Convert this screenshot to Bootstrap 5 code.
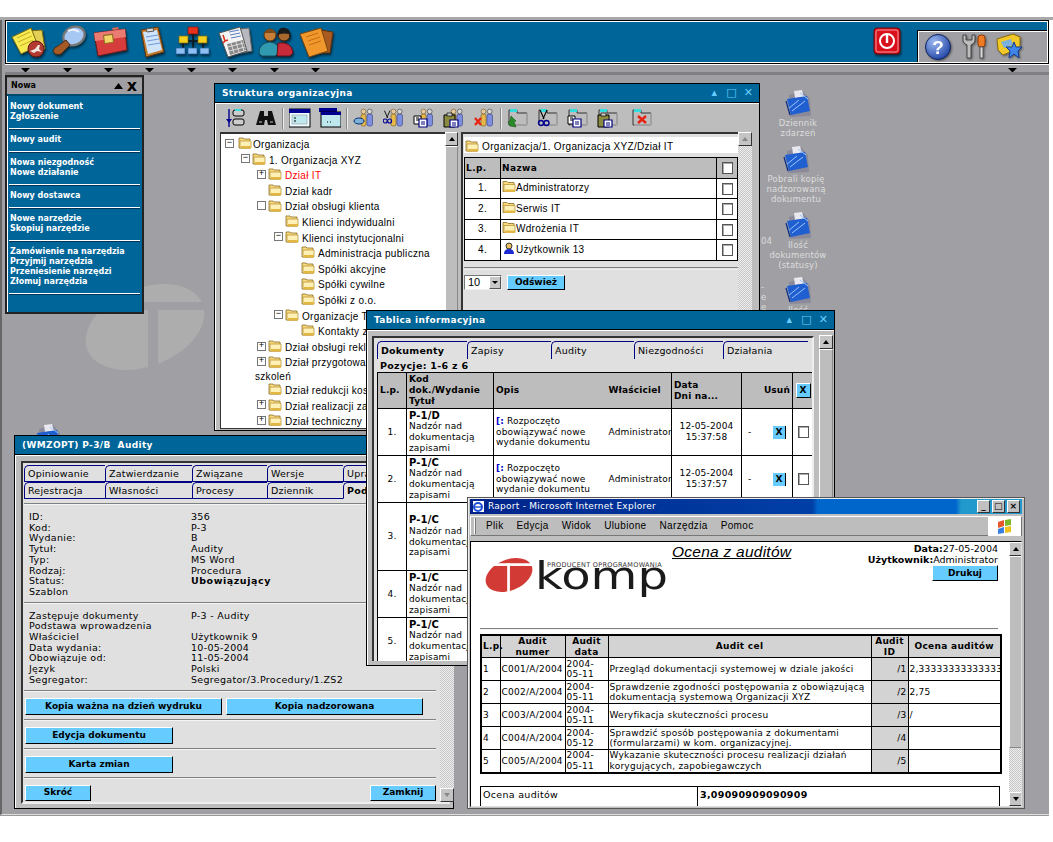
<!DOCTYPE html>
<html lang="pl">
<head>
<meta charset="UTF-8">
<title>System dokumentacji</title>
<link href="https://cdn.jsdelivr.net/npm/bootstrap@5.3.1/dist/css/bootstrap.min.css" rel="stylesheet">
<style>
  body { margin: 0; background: #fff; }
  .wp-page { width: 1053px; height: 842px; overflow: hidden; font: 9px/10.7px "DejaVu Sans", sans-serif; color: #000; background: #fff; }
  .wp-top { height: 20px; flex: none; border-bottom: 3px solid #a8a8a8; }
  .wp-shell { height: 795px; width: 1049px; flex: none; padding-left: 3px; background: #a0a0a4; border-left: 2px solid #666; border-bottom: 1px solid #ddd; box-shadow: 0 1px 0 #999; }
  .wp-bar { height: 44px; background: #006699; border: 1px solid #000; border-left-width: 2px; outline: 1px solid #fff; outline-offset: -2px; }
  .wp-cell { width: 41.4px; flex: none; text-align: center; padding-top: 4px; }
  .wp-cell svg { width: 38px; height: 33px; filter: drop-shadow(1px 2px 1px rgba(0,0,0,.55)); }
  .wp-bartab { width: 131px; height: 33px; margin-top: 7px; padding-left: 6px; background: #a0a0a4; border-left: 1px solid #000; border-top: 1px solid #000; box-shadow: inset 1px 1px 0 #fff; }
  .wp-bartab svg { width: 28px; height: 28px; margin-top: 2px; filter: drop-shadow(1px 1px 1px rgba(0,0,0,.45)); }
  .wp-strip { height: 11px; background: #a0a0a4; border-top: 1px solid #fff; border-bottom: 3px solid #808084; padding-top: 1px; }
  .wp-arrow { width: 41.4px; flex: none; text-align: center; }
  .wp-arrow i { display: inline-block; border: 4px solid transparent; border-top: 4px solid #000; border-bottom: 0; width: 9px; height: 4px; vertical-align: top; margin-top: 2px; }
  .wp-pow { position: absolute; left: 872px; top: 26px; width: 30px; height: 30px; filter: drop-shadow(1px 2px 1px rgba(0,0,0,.5)); }
  .wp-mark { position: absolute; left: 80px; top: 280px; width: 130px; height: 95px; }

  .wp-win { position: absolute; background: #bdbdbd; border: 1px solid #000; box-shadow: inset 1px 0 0 #fff; }
  .wp-title { height: 19px; background: #006699; color: #fff; font-weight: 700; letter-spacing: .35px; border-bottom: 1px solid #000; padding: 0 2px 0 7px; }
  .wp-title + * { border-top: 1px solid #fff; }
  .wp-ctl { color: #66ccff; font: 400 11px/12px "DejaVu Sans", sans-serif; width: 17px; text-align: center; }
  .wp-inset { background: #e0e0e0; border: 2px solid #333; border-right-color: #eee; border-bottom-color: #eee; }

  #menuWin { left: 5px; top: 75px; width: 139px; height: 239px; border: 2px solid #222; background: #006699; z-index: 2; color: #fff; font-weight: 700; font-size: 8px; line-height: 10px; }
  .wp-mhead { height: 19px; background: #a0a0a4; color: #000; padding: 0 5px 0 4px; border-top: 1px solid #777; border-bottom: 2px solid #004a70; }
  .wp-mgrp { margin: 0 2px; padding: 6px 1px 6px 1px; border-bottom: 1px solid #fff; box-shadow: 0 1px 0 #003355; white-space: nowrap; }
  .wp-mgrp:first-of-type { padding-top: 2px; }

  #orgWin { left: 214px; top: 83px; width: 546px; height: 348px; z-index: 3; }
  .wp-tools { height: 29px; padding-left: 10px; }
  .wp-tools svg { width: 22px; height: 20px; flex: none; }
  .wp-sep { width: 2px; height: 21px; margin: 0 -3px; background: #888; border-right: 1px solid #eee; flex: none; }
  .wp-panes { height: 297px; padding-left: 5px; }
  .wp-tree { width: 225px; flex: none; background: #fff; border: 1px solid #333; border-right: 0; border-top-width: 2px; padding: 3px 0 0 4px; overflow: hidden; font: 10px/15.6px "Liberation Sans", sans-serif; letter-spacing: .3px; }
  .wp-node { height: 15.6px; white-space: nowrap; display: flex; align-items: center; }
  .wp-node svg { width: 14px; height: 12px; flex: none; margin-right: 3px; margin-top: -3px; }
  .wp-exp { width: 9px; height: 9px; border: 1px solid #777; font: 9px/7px "Liberation Mono", monospace; text-align: center; flex: none; margin-right: 2px; margin-top: -3px; background: #fff; letter-spacing: 0; }
  .wp-noexp { width: 11px; flex: none; }
  .wp-d0 svg { margin-left: 2px; margin-right: 1px; }
  .wp-d1 { padding-left: 16px; } .wp-d2 { padding-left: 32px; } .wp-d3 { padding-left: 49px; } .wp-d4 { padding-left: 65px; }
  .wp-wrapline { height: 12px; padding-left: 30px; }
  .wp-tree-red { color: #f00; }
  .wp-sb { width: 14px; flex: none; background: #bdbdbd; display: flex; flex-direction: column; }
  .wp-panes > .wp-sb { width: 13px; }
  .wp-sb-track { background: repeating-conic-gradient(#c6c6c6 0 25%, #eee 0 50%) 0 0 / 2px 2px; }
  .wp-sbtn { height: 14px; flex: none; background: #c4c4c4; border: 1px solid; border-color: #fff #333 #333 #fff; position: relative; }
  .wp-sbtn::after { content: ""; position: absolute; left: 3px; top: 4px; border: 3px solid transparent; border-bottom: 4px solid #000; border-top: 0; }
  .wp-sbtn.wp-down::after { border-top: 4px solid #000; border-bottom: 0; }
  .wp-sbtn.wp-dim::after { border-bottom-color: #888; border-top-color: #888; }
  .wp-sb-thumb { background: #bdbdbd; border: 1px solid; border-color: #fff #888 #888 #fff; }
  .wp-right { width: 291px; flex: none; margin-left: 3px; }
  .wp-rpane { width: 277px; flex: none; background: #e0e0e0; border: 2px solid #333; border-right: 0; border-bottom: 0; padding: 1px 0 0 1px; }
  .wp-path { height: 16px; margin-top: 2px; background: #fff; font: 10px/20px "Liberation Sans", sans-serif; letter-spacing: .3px; padding-left: 1px; margin-bottom: 4px; white-space: nowrap; }
  .wp-path svg { width: 14px; height: 12px; margin-top: -3px; }

  .wp-grid { margin: 0; border-color: #000; --bs-table-bg: transparent; font: inherit; color: inherit; table-layout: fixed; }
  .wp-grid td, .wp-grid th { padding: 0 1px; border-color: #000; font-weight: 400; vertical-align: middle; line-height: inherit; }
  .wp-grid td { background: #fff; }
  .wp-grid th { background: #bdbdbd; font-weight: 700; }
  .wp-lp { width: 36px; }
  .wp-chk { display: inline-block; width: 11px; height: 12px; border: 1px solid #555; background: #fff; box-shadow: inset 1px 1px 0 #aaa; vertical-align: middle; }
  .wp-orgt { font: 10px/16px "Liberation Sans", sans-serif; letter-spacing: .3px; width: 274px; }
  .wp-orgt td, .wp-orgt th { height: 20.5px; font-family: "Liberation Sans", sans-serif; }
  .wp-orgt th { font-family: "DejaVu Sans", sans-serif; font-size: 9px; letter-spacing: .4px; }
  .wp-orgt svg { width: 14px; height: 13px; margin-top: -4px; vertical-align: middle; }
  .wp-rule { border-top: 1px solid #808080; box-shadow: 0 1px 0 #eee; height: 2px; margin-top: 6px; }
  .wp-pick { margin-top: 6px; }
  .wp-sel { width: 38px; height: 15px; background: #fff; border: 1px solid; border-color: #777 #eee #eee #777; font: 11px/13px "Liberation Sans", sans-serif; padding-left: 3px; }
  .wp-sel i { margin-left: auto; width: 12px; height: 13px; background: #c8c8c8; border: 1px solid; border-color: #fff #555 #555 #fff; position: relative; }
  .wp-sel i::after { content: ""; position: absolute; left: 2px; top: 4px; border: 3px solid transparent; border-top: 3px solid #000; border-bottom: 0; }
  .wp-btn { --bs-btn-padding-x: 0; --bs-btn-padding-y: 0; --bs-btn-font-size: 9px; --bs-btn-font-weight: 700; --bs-btn-border-radius: 0; --bs-btn-bg: #66ccff; --bs-btn-color: #000; --bs-btn-hover-bg: #66ccff; --bs-btn-line-height: 13px; border-width: 1px; border-color: #fff #000 #000 #fff; display: block; font-family: "DejaVu Sans", sans-serif; }
  .wp-refresh { width: 58px; height: 15px; margin-left: 5px; }

  #infoWin { left: 366px; top: 310px; width: 469px; height: 356px; z-index: 5; }
  .wp-infob { margin: 5px 5px 0 5px; height: 325px; border-bottom: 0; padding: 3px 0 0 3px; overflow: hidden; width: 442px; flex: none; }
  .wp-tabs { height: 18px; font-size: 9.5px; letter-spacing: .2px; }
  .wp-tabc { flex: none; border-top: 1px solid #000080; border-left: 1px solid #000080; border-top-left-radius: 5px; padding: 3px 0 0 3px; white-space: nowrap; overflow: hidden; line-height: 12px; }
  .wp-tabc.wp-on { font-weight: 700; }
  .wp-t90 { width: 90px; } .wp-t84 { width: 84px; } .wp-t83 { width: 83px; } .wp-t89 { width: 89px; } .wp-t85 { width: 85px; }
  .wp-pos { height: 13px; padding: 1px 0 0 3px; font-weight: 700; letter-spacing: .3px; font-size: 9.5px; line-height: 12px; }
  .wp-itbl { width: 436px; letter-spacing: .15px; }
  .wp-itbl th { height: 36px; padding: 0 2px; }
  .wp-itbl td { height: 47px; padding: 0 2px; }
  .wp-itbl td.wp-h68 { height: 68px; }
  .wp-c1 { width: 29px; } .wp-c2 { width: 87px; } .wp-c3 { width: 113px; } .wp-c4 { width: 65px; } .wp-c5 { width: 70px; } .wp-c6 { width: 51px; } .wp-c7 { width: 21px; }
  .wp-code { font-weight: 700; font-size: 10px; }
  .wp-x { display: inline-block; width: 13px; height: 13px; background: #66ccff; border-right: 1px solid #000; font: 700 9px/13px "DejaVu Sans", sans-serif; text-align: center; color: #000; }
  .wp-xh { border: 1px solid; border-color: #fff #000 #000 #fff; width: 15px; height: 15px; }
  .wp-blue { color: #00c; font-weight: 700; }

  #docWin { left: 14px; top: 435px; width: 440px; height: 374px; z-index: 4; }
  .wp-dinner { margin: 5px 4px 0 6px; height: 343px; padding: 2px 0 0 1px; width: 429px; flex: none; }
  .wp-dcol { width: 412px; flex: none; }
  .wp-t81 { width: 81px; } .wp-t87 { width: 87px; } .wp-t75 { width: 75px; } .wp-t76 { width: 76px; } .wp-t92 { width: 92px; }
  .wp-dtabs { height: 17px; font-size: 9.5px; letter-spacing: .2px; }
  .wp-dtabs .wp-tabc { padding-top: 2px; border-bottom: 1px solid #000080; }
  .wp-dtabs .wp-tabc.wp-on { border-bottom-color: transparent; }
  .wp-dline { border-top: 1px solid #808080; box-shadow: 0 1px 0 #f4f4f4; }
  .wp-info { display: grid; grid-template-columns: 162px 1fr; padding: 8px 0 4px 5px; letter-spacing: .3px; font-size: 9.5px; line-height: 10.7px; }
  .wp-info b { letter-spacing: .55px; }
  .wp-bw1 { width: 197px; height: 17px; } .wp-bw2 { width: 197px; height: 17px; } .wp-bw3 { width: 148px; height: 17px; }
  .wp-brow { height: 28px; padding: 7px 0 0 1px; }
  .wp-brow .wp-btn { margin-right: 4px; }
  .wp-bw4 { width: 66px; height: 16px; }
  .wp-pad0 { margin-left: auto; margin-right: 0 !important; }

  #ieWin { left: 467px; top: 497px; width: 558px; height: 312px; z-index: 6; border: 1px solid #555; box-shadow: inset 1px 1px 0 #eee; padding: 1px 2px 3px 2px; background: #c0c0c0; }
  .wp-ietitle { height: 15px; color: #fff; font-size: 9px; letter-spacing: .25px; background: linear-gradient(90deg, #00238a 0, #003399 30%, #003fa6 62%, #0066cc 63%, #0066cc 88%, #2299cc 89%, #2299cc 100%); padding-left: 2px; }
  .wp-ietitle svg { width: 13px; height: 13px; margin-right: 3px; }
  .wp-iebtn { width: 13px; height: 13px; background: #c0c0c0; border: 1px solid; border-color: #fff #333 #333 #fff; margin-right: 2px; color: #000; font: 700 9px/10px "DejaVu Sans", sans-serif; text-align: center; }
  .wp-iemenu { height: 20px; margin-top: 2px; background: #bdbdbd; border: 1px solid; border-color: #fff #777 #777 #fff; padding-left: 3px; font: 10px/18px "Liberation Sans", sans-serif; gap: 13px; letter-spacing: .35px; }
  .wp-iemenu i { width: 2px; height: 16px; border-left: 1px solid #fff; border-right: 1px solid #777; margin-right: -3px; }
  .wp-ieflag { margin-left: auto; width: 33px; height: 19px; background: #fff; text-align: center; padding-top: 1px; }
  .wp-ieflag svg { width: 17px; height: 17px; }
  .wp-iebody { height: 266px; margin-top: 5px; background: #fff; border: 1px solid; border-color: #000 #ddd #ddd #000; overflow: hidden; }
  .wp-iemain { width: 538px; flex: none; padding: 4px 11px 0 9px; overflow: hidden; }
  .wp-logo { width: 187px; height: 62px; margin-left: 5px; position: relative; flex: none; }
  .wp-logo svg { position: absolute; left: -2px; top: 10px; width: 52px; height: 38px; }
  .wp-komp { position: absolute; left: 50px; top: 9px; font: 37px/44px "DejaVu Sans", sans-serif; color: #1a1a1a; transform: scaleX(1.3); transform-origin: left; }
  .wp-prod { position: absolute; left: 62px; top: 16px; font: 6.5px/7px "DejaVu Sans", sans-serif; color: #333; white-space: nowrap; letter-spacing: .3px; }
  .wp-rtitle { font: italic 15.5px/20px "Liberation Sans", sans-serif; text-decoration: underline; margin-left: 0; letter-spacing: .25px; margin-top: -4px; }
  .wp-rinfo { margin-left: auto; text-align: right; font-size: 9.5px; line-height: 10.5px; margin-top: -2px; }
  .wp-rule2 { margin: 20px 0 5px; }
  .wp-rtbl { width: 520px; border: 2px solid #000; letter-spacing: .25px; line-height: 10.7px; }
  .wp-rtbl td, .wp-rtbl th { height: 23px; line-height: 10.6px; }
  .wp-rtbl th { height: 21px; background: #d3d3d3; letter-spacing: .3px; }
  .wp-grid td.wp-rgray { background: #d3d3d3; }
  .wp-r1 { width: 19px; } .wp-r2 { width: 65px; } .wp-r3 { width: 43px; } .wp-r4 { width: 263px; } .wp-r5 { width: 37px; } .wp-r6 { width: 93px; }
  .wp-btm { width: 520px; height: 22px; border: 1px solid #000; border-bottom: 0; margin-top: 12px; font-size: 9.5px; letter-spacing: .3px; }
  .wp-btm div { padding: 3px 2px 0 2px; }
  .wp-btm div:first-child { width: 217px; border-right: 1px solid #000; flex: none; }
  .wp-iesb { width: 14px; flex: none; margin-left: 0; }
  .wp-rep { height: 192px; flex: none; }

  .wp-dic { position: absolute; width: 60px; text-align: center; color: #ddd; letter-spacing: .2px; line-height: 10px; font-size: 8.5px; z-index: 1; }
  .wp-dic svg { width: 28px; height: 28px; display: block; margin: 0 auto; }
  .wp-i1 { left: 768px; top: 90px; } .wp-i2 { left: 766px; top: 146px; } .wp-i3 { left: 768px; top: 212px; } .wp-i4 { left: 768px; top: 277px; } .wp-i5 { left: 18px; top: 424px; }
  .wp-frag { position: absolute; left: 761px; color: #ddd; font-size: 8.5px; line-height: 10px; z-index: 1; }
  .wp-f1 { top: 236px; } .wp-f2 { top: 282px; }
</style>
</head>
<body>

<svg width="0" height="0" class="position-absolute">
  <defs>
    <symbol id="ic-folder" viewBox="0 0 14 12">
      <path d="M1 2 L1 1 L5 1 L6 2 L12 2 L12 11 L1 11Z" fill="#fbd97c" stroke="#8a7026" stroke-width=".8"/>
      <path d="M2 4 H13 V11 H2Z" fill="#fff0b5" stroke="#b8983f" stroke-width=".8"/>
      <path d="M3 9 H13 V11.5 H3Z" fill="#e2b743"/>
    </symbol>
    <symbol id="ic-doc" viewBox="0 0 28 28">
      <path d="M5 5 L19 1 L26 9 L27 26 L6 27Z" fill="#8a8a9a"/>
      <path d="M10 1 L18 0 L20 7 L11 8Z" fill="#e8e8ee"/>
      <path d="M3 9 L23 6 L26 21 L7 25Z" fill="#1f5fd0"/>
      <path d="M4 19 L15 10 M8 21 L21 11 M16 3 L24 9" stroke="#9cc4ff" stroke-width="1" fill="none"/>
      <path d="M2 11 L6 25" stroke="#0a2a80" stroke-width="1.2"/>
    </symbol>
    <symbol id="ic-people" viewBox="0 0 22 20">
      <rect x="8" y="6" width="5" height="12" rx="2" fill="#e8b84a" stroke="#6b5520" stroke-width=".6"/>
      <circle cx="10.5" cy="3.5" r="2.4" fill="#e8c9a0" stroke="#6b5520" stroke-width=".6"/>
      <rect x="14" y="6" width="5.5" height="12" rx="2" fill="#7f8fe0" stroke="#333a80" stroke-width=".6"/>
      <circle cx="16.7" cy="3.5" r="2.4" fill="#d8d8d8" stroke="#333" stroke-width=".6"/>
    </symbol>
    <symbol id="ic-fold2" viewBox="0 0 22 20">
      <path d="M2 2 H10 V5 H20 V17 H2Z" fill="#bdbdbd" stroke="#333" stroke-width="1"/>
      <path d="M3 1 H10 V4 H3Z" fill="#33dddd"/>
      <path d="M20 5 V17 H3" stroke="#fff" stroke-width=".6" fill="none"/>
    </symbol>
    <symbol id="ic-copy" viewBox="0 0 22 20">
      <path d="M1 8 H8 V16 H1Z" fill="#fff" stroke="#000"/>
      <path d="M6 11 H14 V19 H6Z" fill="#fff" stroke="#000080" stroke-width="1.2"/>
      <path d="M8 14 H12 M8 16 H12" stroke="#000080"/>
      <path d="M3 10 H6 M3 12 H6" stroke="#000"/>
    </symbol>
    <symbol id="ic-clip" viewBox="0 0 22 20">
      <path d="M1 7 H12 V19 H1Z" fill="#8b8b40" stroke="#000"/>
      <path d="M4 5 H9 V8 H4Z" fill="#ccc" stroke="#000" stroke-width=".7"/>
      <path d="M7 12 H15 V19 H7Z" fill="#fff" stroke="#000080" stroke-width="1.2"/>
      <path d="M9 15 H13 M9 17 H13" stroke="#000080"/>
    </symbol>
    <symbol id="ic-scis" viewBox="0 0 22 20">
      <path d="M3 2 L7 11 M10 2 L6 11" stroke="#000" stroke-width="1.1" fill="none"/>
      <circle cx="4" cy="15" r="2.5" fill="none" stroke="#000090" stroke-width="1.4"/>
      <circle cx="9.5" cy="15" r="2.5" fill="none" stroke="#000090" stroke-width="1.4"/>
    </symbol>
  </defs>
</svg>

<div class="wp-page d-flex flex-column position-relative">
  <div class="wp-top"></div>
  <div class="wp-shell">
    <!-- pasek ikon -->
    <div class="wp-bar d-flex">
      <div class="d-flex flex-grow-1">
        <div class="wp-cell"><svg viewBox="0 0 38 33">
          <path d="M18 6 L33 5 L36 24 L20 27Z" fill="#e3cf55" stroke="#7b6c14"/>
          <path d="M3 12 L22 3 L29 21 L12 29Z" fill="#f8ea52" stroke="#7b6c14"/>
          <path d="M8 13 L21 7 M9 17 L23 11 M11 21 L24 15" stroke="#c4ae22"/>
          <circle cx="27" cy="24" r="8" fill="#b23a30" stroke="#5a1a14"/>
          <path d="M21 26 L26 24 L29 20 L31 20 L30 24 L33 27 L28 26 L25 28Z" fill="#f3e6e0"/>
        </svg></div>
        <div class="wp-cell"><svg viewBox="0 0 38 33">
          <ellipse cx="24" cy="11" rx="11" ry="9" fill="#a8c8f4" stroke="#777" stroke-width="2.4" transform="rotate(-25 24 11)"/>
          <path d="M18 6 Q24 3 29 7" stroke="#e8f2ff" stroke-width="2" fill="none"/>
          <path d="M16 15 L20 20 L11 29 Q5 31 3 26 Q4 22 8 21Z" fill="#a45a26" stroke="#4e2a10"/>
        </svg></div>
        <div class="wp-cell"><svg viewBox="0 0 38 33">
          <path d="M21 3 L27 2 L29 7 L23 8Z" fill="#d96a5a"/>
          <path d="M3 8 L34 4 L36 25 L7 31Z" fill="#d63c3c" stroke="#6a1a1a"/>
          <path d="M3 8 L34 4 L35 12 L4 16Z" fill="#e97b73"/>
          <rect x="13" y="10" width="9" height="8" fill="#f2d66a" stroke="#8a6a1a" transform="rotate(-7 17 14)"/>
        </svg></div>
        <div class="wp-cell"><svg viewBox="0 0 38 33">
          <path d="M8 5 L25 2 L31 27 L13 32Z" fill="#c47a2c" stroke="#5e3610"/>
          <path d="M10 7 L24 5 L29 25 L15 29Z" fill="#cfe3fb"/>
          <path d="M13 12 L25 10 M14 16 L26 14 M15 20 L27 18" stroke="#6e9ad8"/>
          <path d="M13 4 L20 3 L21 6 L14 7Z" fill="#ddd" stroke="#555"/>
        </svg></div>
        <div class="wp-cell"><svg viewBox="0 0 38 33">
          <path d="M19 9 V15 M9 16 H29 M9 16 V25 M19 16 V25 M29 16 V25" stroke="#111" stroke-width="1.4" fill="none"/>
          <rect x="14" y="2" width="10" height="7" fill="#e8321e" stroke="#7a160c" stroke-width=".7"/>
          <rect x="5" y="11" width="9" height="7" fill="#f4d020" stroke="#7a6a10" stroke-width=".7"/>
          <rect x="24" y="11" width="9" height="7" fill="#f4d020" stroke="#7a6a10" stroke-width=".7"/>
          <rect x="2" y="23" width="9" height="6" fill="#8cc0f4" stroke="#2a5a9a" stroke-width=".7"/>
          <rect x="14" y="23" width="9" height="6" fill="#8cc0f4" stroke="#2a5a9a" stroke-width=".7"/>
          <rect x="26" y="23" width="9" height="6" fill="#8cc0f4" stroke="#2a5a9a" stroke-width=".7"/>
        </svg></div>
        <div class="wp-cell"><svg viewBox="0 0 38 33">
          <path d="M14 5 L33 3 L36 26 L20 29Z" fill="#b8b8c0" stroke="#666"/>
          <path d="M3 8 L24 2 L31 26 L12 32Z" fill="#f4f4f4" stroke="#555"/>
          <path d="M13 7 L23 5 M14 10 L24 8 M15 13 L25 11" stroke="#5a80c0"/>
          <path d="M7 10 L9 16 L12 15 M9 16 L7 18" stroke="#d8341e" stroke-width="1.6" fill="none"/>
          <path d="M11 19 L27 15 L30 25 L14 30Z" fill="#888"/>
          <path d="M15 18 L18 28 M20 17 L23 27 M25 16 L28 26 M12 22 L28 18 M13 26 L29 22" stroke="#eee" stroke-width=".8"/>
        </svg></div>
        <div class="wp-cell"><svg viewBox="0 0 38 33">
          <path d="M2 28 Q2 18 13 17 Q23 18 22 28 L18 31 H5Z" fill="#2f9ab0" stroke="#17505e"/>
          <circle cx="13" cy="10" r="6" fill="#c88038" stroke="#5e3610"/>
          <path d="M7 8 Q13 1 19 8Z" fill="#7a4a1a"/>
          <path d="M21 18 Q35 16 36 28 L33 31 H20Z" fill="#c82a3a" stroke="#5e1018"/>
          <circle cx="27" cy="10" r="6" fill="#a8682c" stroke="#3a2008"/>
          <path d="M20 11 Q21 1 28 3 Q35 4 33 15 L32 9 Q27 8 23 9Z" fill="#1a1a1a"/>
        </svg></div>
        <div class="wp-cell"><svg viewBox="0 0 38 33">
          <path d="M17 4 L35 7 L32 28 L16 28Z" fill="#a85a20" stroke="#5e300c"/>
          <path d="M2 9 L23 3 L30 26 L11 32Z" fill="#f0982c" stroke="#7a4610"/>
          <path d="M8 12 L20 8 M10 16 L22 12 M11 20 L23 16" stroke="#c46c14"/>
        </svg></div>
      </div>
      <div class="wp-bartab d-flex align-self-end gap-2">
        <svg viewBox="0 0 28 28"><defs><radialGradient id="gh" cx=".35" cy=".3" r=".8"><stop offset="0" stop-color="#9cb8f0"/><stop offset="1" stop-color="#1a3ea0"/></radialGradient></defs><circle cx="14" cy="14" r="12.5" fill="url(#gh)" stroke="#0e2360"/><text x="14" y="21" font-size="19" font-weight="700" fill="#fff" text-anchor="middle" font-family="Liberation Sans">?</text></svg>
        <svg viewBox="0 0 28 28"><path d="M3 2 L3 8 Q4 11 7 12 L7 25 L11 25 L11 12 Q14 11 15 8 L15 2 L12 2 L12 7 L6 7 L6 2Z" fill="#bdbdbd" stroke="#444"/><rect x="18" y="2" width="7" height="12" rx="3" fill="#f07a22" stroke="#8a3c08"/><rect x="20" y="14" width="3" height="11" fill="#ddd" stroke="#555"/></svg>
        <svg viewBox="0 0 28 28"><path d="M1 6 L17 1 L24 4 L24 15 L7 22 L2 17Z" fill="#f0c828" stroke="#8a6a10"/><path d="M5 9 L15 6 L17 12 L8 15Z" fill="#7ab0e0"/><path d="M18 9 L20 14 L26 14 L22 18 L23 25 L18 21 L13 25 L14 18 L10 14 L16 14Z" fill="#3f86e8" stroke="#123a90"/></svg>
      </div>
    </div>
    <div class="wp-strip d-flex">
      <div class="wp-arrow"><i></i></div><div class="wp-arrow"><i></i></div><div class="wp-arrow"><i></i></div><div class="wp-arrow"><i></i></div>
      <div class="wp-arrow"><i></i></div><div class="wp-arrow"><i></i></div><div class="wp-arrow"><i></i></div><div class="wp-arrow"><i></i></div>
      <div class="wp-arrow ms-auto me-3"><i></i></div>
    </div>
  </div>
  <div class="flex-grow-1"></div>

  <svg class="wp-pow" viewBox="0 0 30 30"><rect x="2" y="2" width="26" height="26" rx="3" fill="#d8101c" stroke="#70060c"/><rect x="4" y="4" width="22" height="22" rx="2" fill="none" stroke="#ff9a9a"/><circle cx="15" cy="15" r="7" fill="none" stroke="#fff" stroke-width="2"/><path d="M15 9 V17" stroke="#fff" stroke-width="2.4"/></svg>

  <svg class="wp-mark" viewBox="0 0 130 95">
    <ellipse cx="65" cy="47" rx="62" ry="39" fill="#adadad" transform="rotate(-22 65 47)"/>
    <rect x="0" y="22" width="130" height="8" fill="#a0a0a4"/>
    <rect x="68" y="22" width="10" height="73" fill="#a0a0a4"/>
  </svg>

  <!-- ikony pulpitu -->
  <div class="wp-dic wp-i1"><svg><use href="#ic-doc"/></svg>Dziennik zdarzeń</div>
  <div class="wp-dic wp-i2"><svg><use href="#ic-doc"/></svg>Pobrali kopię nadzorowaną dokumentu</div>
  <div class="wp-dic wp-i3"><svg><use href="#ic-doc"/></svg>Ilość dokumentów (statusy)</div>
  <div class="wp-dic wp-i4"><svg><use href="#ic-doc"/></svg>Ilość</div>
  <div class="wp-dic wp-i5"><svg><use href="#ic-doc"/></svg></div>
  <div class="wp-frag wp-f1">04</div>
  <div class="wp-frag wp-f2">-<br>e<br>e</div>

  <!-- menu Nowa -->
  <div class="wp-win" id="menuWin">
    <div class="wp-mhead d-flex align-items-center justify-content-between">
      <span>Nowa</span>
      <span class="d-flex align-items-center gap-1"><svg width="9" height="6" viewBox="0 0 9 6"><path d="M0 6 L4.5 0 L9 6Z"/></svg><span class="fs-6 lh-1">x</span></span>
    </div>
    <div class="wp-mgrp">Nowy dokument<br>Zgłoszenie</div>
    <div class="wp-mgrp">Nowy audit</div>
    <div class="wp-mgrp">Nowa niezgodność<br>Nowe działanie</div>
    <div class="wp-mgrp">Nowy dostawca</div>
    <div class="wp-mgrp">Nowe narzędzie<br>Skopiuj narzędzie</div>
    <div class="wp-mgrp">Zamówienie na narzędzia<br>Przyjmij narzędzia<br>Przeniesienie narzędzi<br>Złomuj narzędzia</div>
  </div>

  <!-- Struktura organizacyjna -->
  <div class="wp-win" id="orgWin">
    <div class="wp-title d-flex align-items-center">
      <span class="me-auto">Struktura organizacyjna</span>
      <span class="wp-ctl">▴</span><span class="wp-ctl">□</span><span class="wp-ctl">✕</span>
    </div>
    <div class="wp-tools d-flex align-items-center gap-2">
      <svg viewBox="0 0 22 20"><path d="M4 1 V19" stroke="#000090" stroke-width="1.4"/><path d="M1 11 L4 15 L7 11" fill="#000090"/><rect x="8" y="2" width="11" height="6" rx="2" fill="#ccc" stroke="#000"/><path d="M10 2 H16" stroke="#33dddd" stroke-width="2"/><rect x="8" y="11" width="11" height="6" rx="2" fill="#ccc" stroke="#000"/></svg>
      <svg viewBox="0 0 22 20"><path d="M5 3 H9 V8 H13 V3 H17 L21 17 H13 L12 12 H10 L9 17 H1Z" fill="#111"/><path d="M4 14 H7 M15 14 H18" stroke="#ccc"/></svg>
      <span class="wp-sep"></span>
      <svg viewBox="0 0 22 20"><rect x="0" y="1" width="21" height="18" fill="#eefaff" stroke="#000"/><rect x="0" y="1" width="21" height="4" fill="#000090"/><rect x="3" y="7" width="15" height="9" fill="#bfe8ee" stroke="#888" stroke-width=".5"/><path d="M5 10 h2 M5 13 h2" stroke="#000"/></svg>
      <svg viewBox="0 0 22 20"><rect x="0" y="0" width="18" height="4" fill="#000090"/><rect x="2" y="4" width="20" height="15" fill="#bfe8ee" stroke="#000"/><rect x="2" y="4" width="20" height="3" fill="#000090"/><path d="M8 14 h1 M11 14 h1" stroke="#000"/></svg>
      <span class="wp-sep"></span>
      <svg viewBox="0 0 22 20"><use href="#ic-people"/><ellipse cx="6" cy="13" rx="5" ry="3" fill="#7fb0d8" stroke="#00307a"/></svg>
      <svg viewBox="0 0 22 20"><use href="#ic-people"/><use href="#ic-scis" transform="translate(-1 1) scale(.8)"/></svg>
      <svg viewBox="0 0 22 20"><use href="#ic-people"/><use href="#ic-copy"/></svg>
      <svg viewBox="0 0 22 20"><use href="#ic-people"/><use href="#ic-clip"/></svg>
      <svg viewBox="0 0 22 20"><use href="#ic-people"/><path d="M2 10 L8 17 M8 10 L2 17" stroke="#e82010" stroke-width="2.2"/></svg>
      <span class="wp-sep"></span>
      <svg viewBox="0 0 22 20"><use href="#ic-fold2"/><path d="M4 8 L9 13 L7 14 L9 19 L3 18 L1 14 L3 13Z" fill="#2a8a2a" stroke="#0e4a0e" stroke-width=".5"/></svg>
      <svg viewBox="0 0 22 20"><use href="#ic-fold2"/><use href="#ic-scis"/></svg>
      <svg viewBox="0 0 22 20"><use href="#ic-fold2"/><use href="#ic-copy"/></svg>
      <svg viewBox="0 0 22 20"><use href="#ic-fold2"/><use href="#ic-clip"/></svg>
      <svg class="ms-1" viewBox="0 0 22 20"><use href="#ic-fold2"/><path d="M7 8 L15 15 M15 8 L7 15" stroke="#e82010" stroke-width="2.4"/></svg>
    </div>
    <div class="wp-panes d-flex">
      <div class="wp-tree">
        <div class="wp-node wp-d0"><span class="wp-exp">−</span><svg><use href="#ic-folder"/></svg>Organizacja</div>
        <div class="wp-node wp-d1"><span class="wp-exp">−</span><svg><use href="#ic-folder"/></svg>1. Organizacja XYZ</div>
        <div class="wp-node wp-d2"><span class="wp-exp">+</span><svg><use href="#ic-folder"/></svg><span class="wp-tree-red">Dział IT</span></div>
        <div class="wp-node wp-d2"><span class="wp-noexp"></span><svg><use href="#ic-folder"/></svg>Dział kadr</div>
        <div class="wp-node wp-d2"><span class="wp-exp"></span><svg><use href="#ic-folder"/></svg>Dział obsługi klienta</div>
        <div class="wp-node wp-d3"><span class="wp-noexp"></span><svg><use href="#ic-folder"/></svg>Klienci indywidualni</div>
        <div class="wp-node wp-d3"><span class="wp-exp">−</span><svg><use href="#ic-folder"/></svg>Klienci instytucjonalni</div>
        <div class="wp-node wp-d4"><span class="wp-noexp"></span><svg><use href="#ic-folder"/></svg>Administracja publiczna</div>
        <div class="wp-node wp-d4"><span class="wp-noexp"></span><svg><use href="#ic-folder"/></svg>Spółki akcyjne</div>
        <div class="wp-node wp-d4"><span class="wp-noexp"></span><svg><use href="#ic-folder"/></svg>Spółki cywilne</div>
        <div class="wp-node wp-d4"><span class="wp-noexp"></span><svg><use href="#ic-folder"/></svg>Spółki z o.o.</div>
        <div class="wp-node wp-d3"><span class="wp-exp">−</span><svg><use href="#ic-folder"/></svg>Organizacje Techniczne</div>
        <div class="wp-node wp-d4"><span class="wp-noexp"></span><svg><use href="#ic-folder"/></svg>Kontakty zewnętrzne</div>
        <div class="wp-node wp-d2"><span class="wp-exp">+</span><svg><use href="#ic-folder"/></svg>Dział obsługi reklamacji</div>
        <div class="wp-node wp-d2"><span class="wp-exp">+</span><svg><use href="#ic-folder"/></svg>Dział przygotowania</div>
        <div class="wp-node wp-wrapline">szkoleń</div>
        <div class="wp-node wp-d2"><span class="wp-noexp"></span><svg><use href="#ic-folder"/></svg>Dział redukcji kosztów</div>
        <div class="wp-node wp-d2"><span class="wp-exp">+</span><svg><use href="#ic-folder"/></svg>Dział realizacji zamówień</div>
        <div class="wp-node wp-d2"><span class="wp-exp">+</span><svg><use href="#ic-folder"/></svg>Dział techniczny</div>
      </div>
      <div class="wp-sb">
        <div class="wp-sbtn"></div>
        <div class="wp-sb-thumb flex-grow-1"></div>
      </div>
      <div class="wp-right d-flex">
        <div class="wp-rpane">
          <div class="wp-path"><svg><use href="#ic-folder"/></svg> Organizacja/1. Organizacja XYZ/Dział IT</div>
          <table class="table table-bordered wp-grid wp-orgt">
            <tr><th class="wp-lp text-start">L.p.</th><th>Nazwa</th><th class="text-center wp-c7"><span class="wp-chk"></span></th></tr>
            <tr><td class="text-center">1.</td><td><svg><use href="#ic-folder"/></svg>Administratorzy</td><td class="text-center"><span class="wp-chk"></span></td></tr>
            <tr><td class="text-center">2.</td><td><svg><use href="#ic-folder"/></svg>Serwis IT</td><td class="text-center"><span class="wp-chk"></span></td></tr>
            <tr><td class="text-center">3.</td><td><svg><use href="#ic-folder"/></svg>Wdrożenia IT</td><td class="text-center"><span class="wp-chk"></span></td></tr>
            <tr><td class="text-center">4.</td><td><svg viewBox="0 0 14 13"><circle cx="7" cy="4" r="3" fill="#e8c060" stroke="#333"/><path d="M2 12 Q2 7 7 7 Q12 7 12 12Z" fill="#1a2ad0"/></svg>Użytkownik 13</td><td class="text-center"><span class="wp-chk"></span></td></tr>
          </table>
          <div class="wp-rule"></div>
          <div class="d-flex align-items-center wp-pick">
            <div class="wp-sel d-flex">10<i></i></div>
            <button class="btn wp-btn wp-refresh" type="button">Odśwież</button>
          </div>
        </div>
        <div class="wp-sb wp-sb-track">
          <div class="wp-sbtn wp-dim"></div>
        </div>
      </div>
    </div>
  </div>

  <!-- Tablica informacyjna -->
  <div class="wp-win" id="infoWin">
    <div class="wp-title d-flex align-items-center">
      <span class="me-auto">Tablica informacyjna</span>
      <span class="wp-ctl">▴</span><span class="wp-ctl">□</span><span class="wp-ctl">✕</span>
    </div>
    <div class="d-flex">
      <div class="wp-inset wp-infob">
        <div class="wp-tabs d-flex">
          <div class="wp-tabc wp-on wp-t90">Dokumenty</div>
          <div class="wp-tabc wp-t84">Zapisy</div>
          <div class="wp-tabc wp-t83">Audity</div>
          <div class="wp-tabc wp-t89">Niezgodności</div>
          <div class="wp-tabc wp-t85">Działania</div>
        </div>
        <div class="wp-pos">Pozycje: 1-6 z 6</div>
        <table class="table table-bordered wp-grid wp-itbl">
          <tr>
            <th class="wp-c1">L.p.</th><th class="wp-c2">Kod dok./Wydanie Tytuł</th>
            <th class="wp-c3 border-end-0">Opis</th><th class="wp-c4 border-start-0">Właściciel</th>
            <th class="wp-c5">Data<br>Dni na...</th><th class="wp-c6 text-end">Usuń</th>
            <th class="wp-c7 text-center"><span class="wp-x wp-xh">X</span></th>
          </tr>
          <tr>
            <td class="text-center">1.</td><td><span class="wp-code">P-1/D</span><br>Nadzór nad dokumentacją zapisami</td>
            <td class="border-end-0"><span class="wp-blue">[:</span> Rozpoczęto obowiązywać nowe wydanie dokumentu</td><td class="border-start-0">Administrator</td>
            <td class="text-center">12-05-2004<br>15:37:58</td><td><div class="d-flex justify-content-between align-items-center px-1">-<span class="wp-x">X</span></div></td>
            <td class="text-center"><span class="wp-chk"></span></td>
          </tr>
          <tr>
            <td class="text-center">2.</td><td><span class="wp-code">P-1/C</span><br>Nadzór nad dokumentacją zapisami</td>
            <td class="border-end-0"><span class="wp-blue">[:</span> Rozpoczęto obowiązywać nowe wydanie dokumentu</td><td class="border-start-0">Administrator</td>
            <td class="text-center">12-05-2004<br>15:37:57</td><td><div class="d-flex justify-content-between align-items-center px-1">-<span class="wp-x">X</span></div></td>
            <td class="text-center"><span class="wp-chk"></span></td>
          </tr>
          <tr>
            <td class="text-center wp-h68">3.</td><td class="wp-h68"><span class="wp-code">P-1/C</span><br>Nadzór nad dokumentacją zapisami</td>
            <td colspan="5" class="wp-h68"></td>
          </tr>
          <tr>
            <td class="text-center">4.</td><td><span class="wp-code">P-1/C</span><br>Nadzór nad dokumentacją zapisami</td>
            <td colspan="5"></td>
          </tr>
          <tr>
            <td class="text-center">5.</td><td><span class="wp-code">P-1/C</span><br>Nadzór nad dokumentacją zapisami</td>
            <td colspan="5"></td>
          </tr>
        </table>
      </div>
      <div class="wp-sb wp-sb-track mt-1">
        <div class="wp-sbtn"></div>
        <div class="wp-sb-thumb flex-grow-1"></div>
      </div>
    </div>
  </div>

  <!-- Dokument -->
  <div class="wp-win" id="docWin">
    <div class="wp-title d-flex align-items-center"><span class="me-auto">(WMZOPT) P-3/B&nbsp; Audity</span></div>
    <div class="d-flex">
      <div class="wp-inset wp-dinner d-flex">
        <div class="wp-dcol">
          <div class="wp-dtabs d-flex">
            <div class="wp-tabc wp-t81">Opiniowanie</div>
            <div class="wp-tabc wp-t87">Zatwierdzanie</div>
            <div class="wp-tabc wp-t75">Związane</div>
            <div class="wp-tabc wp-t76">Wersje</div>
            <div class="wp-tabc wp-t92">Uprawnienia</div>
          </div>
          <div class="wp-dtabs d-flex">
            <div class="wp-tabc wp-t81">Rejestracja</div>
            <div class="wp-tabc wp-t87">Własności</div>
            <div class="wp-tabc wp-t75">Procesy</div>
            <div class="wp-tabc wp-t76">Dziennik</div>
            <div class="wp-tabc wp-on wp-t92">Podgląd</div>
          </div>
          <div class="wp-dline mt-1"></div>
          <div class="wp-info">
            <span>ID:</span><span>356</span>
            <span>Kod:</span><span>P-3</span>
            <span>Wydanie:</span><span>B</span>
            <span>Tytuł:</span><span>Audity</span>
            <span>Typ:</span><span>MS Word</span>
            <span>Rodzaj:</span><span>Procedura</span>
            <span>Status:</span><b>Ubowiązujący</b>
            <span>Szablon</span><span></span>
          </div>
          <div class="wp-dline"></div>
          <div class="wp-info">
            <span>Zastępuje dokumenty</span><span>P-3 - Audity</span>
            <span>Podstawa wprowadzenia</span><span></span>
            <span>Właściciel</span><span>Użytkownik 9</span>
            <span>Data wydania:</span><span>10-05-2004</span>
            <span>Obowiązuje od:</span><span>11-05-2004</span>
            <span>Język</span><span>Polski</span>
            <span>Segregator:</span><span>Segregator/3.Procedury/1.ZS2</span>
          </div>
          <div class="wp-dline"></div>
          <div class="wp-brow d-flex"><button class="btn wp-btn wp-bw1" type="button">Kopia ważna na dzień wydruku</button><button class="btn wp-btn wp-bw2" type="button">Kopia nadzorowana</button></div>
          <div class="wp-dline"></div>
          <div class="wp-brow d-flex"><button class="btn wp-btn wp-bw3" type="button">Edycja dokumentu</button></div>
          <div class="wp-dline"></div>
          <div class="wp-brow d-flex"><button class="btn wp-btn wp-bw3" type="button">Karta zmian</button></div>
          <div class="wp-dline"></div>
          <div class="wp-brow d-flex"><button class="btn wp-btn wp-bw4" type="button">Skróć</button><button class="btn wp-btn wp-bw4 wp-pad0" type="button">Zamknij</button></div>
        </div>
        <div class="wp-sb wp-sb-track ms-1">
          <div class="flex-grow-1"></div>
          <div class="wp-sbtn wp-down wp-dim"></div>
        </div>
      </div>
    </div>
  </div>

  <!-- Raport IE -->
  <div class="wp-win" id="ieWin">
    <div class="wp-ietitle d-flex align-items-center">
      <svg viewBox="0 0 13 13"><rect x="1" y="1" width="11" height="11" fill="#fff"/><circle cx="6" cy="7" r="4" fill="none" stroke="#1a4ed8" stroke-width="2"/><path d="M2 7 H10" stroke="#1a4ed8" stroke-width="1.4"/></svg>
      <span class="me-auto">Raport - Microsoft Internet Explorer</span>
      <span class="wp-iebtn">_</span><span class="wp-iebtn">□</span><span class="wp-iebtn">×</span>
    </div>
    <div class="wp-iemenu d-flex align-items-center">
      <i></i><span>Plik</span><span>Edycja</span><span>Widok</span><span>Ulubione</span><span>Narzędzia</span><span>Pomoc</span>
      <div class="wp-ieflag"><svg viewBox="0 0 17 17"><path d="M2 4 L8 2 L8 8 L2 10Z" fill="#e8562a"/><path d="M9 2 L15 1 L15 7 L9 8Z" fill="#7ab82a"/><path d="M2 11 L8 9 L8 15 L2 16Z" fill="#3a7ee0"/><path d="M9 9 L15 8 L15 14 L9 15Z" fill="#f0c020"/></svg></div>
    </div>
    <div class="wp-iebody d-flex">
      <div class="wp-iemain">
        <div class="d-flex">
          <div class="wp-logo">
            <svg viewBox="0 0 54 42"><ellipse cx="27" cy="21" rx="27" ry="17" fill="#d23a36" transform="rotate(-22 27 21)"/><rect x="0" y="8" width="54" height="3" fill="#fff"/><rect x="25" y="8" width="3" height="34" fill="#fff"/></svg>
            <span class="wp-komp">komp</span>
            <span class="wp-prod">PRODUCENT OPROGRAMOWANIA</span>
          </div>
          <div class="wp-rtitle">Ocena z auditów</div>
          <div class="wp-rinfo">
            <div><b>Data:</b>27-05-2004</div>
            <div><b>Użytkownik:</b>Administrator</div>
            <button class="btn wp-btn wp-bw4 ms-auto" type="button">Drukuj</button>
          </div>
        </div>
        <div class="wp-dline wp-rule2"></div>
        <table class="table table-bordered wp-grid wp-rtbl">
          <tr><th class="wp-r1 text-center">L.p.</th><th class="wp-r2 text-center">Audit numer</th><th class="wp-r3 text-center">Audit data</th><th class="wp-r4 text-center">Audit cel</th><th class="wp-r5 text-center">Audit ID</th><th class="wp-r6 text-center">Ocena auditów</th></tr>
          <tr><td>1</td><td>C001/A/2004</td><td>2004-05-11</td><td>Przegląd dokumentacji systemowej w dziale jakości</td><td class="wp-rgray text-end">/1</td><td>2,33333333333333</td></tr>
          <tr><td>2</td><td>C002/A/2004</td><td>2004-05-11</td><td>Sprawdzenie zgodności postępowania z obowiązującą dokumentacją systemową Organizacji XYZ</td><td class="wp-rgray text-end">/2</td><td>2,75</td></tr>
          <tr><td>3</td><td>C003/A/2004</td><td>2004-05-11</td><td>Weryfikacja skuteczności procesu</td><td class="wp-rgray text-end">/3</td><td>/</td></tr>
          <tr><td>4</td><td>C004/A/2004</td><td>2004-05-12</td><td>Sprawdzić sposób postępowania z dokumentami (formularzami) w kom. organizacyjnej.</td><td class="wp-rgray text-end">/4</td><td></td></tr>
          <tr><td>5</td><td>C005/A/2004</td><td>2004-05-11</td><td>Wykazanie skuteczności procesu realizacji działań korygujących, zapobiegawczych</td><td class="wp-rgray text-end">/5</td><td></td></tr>
        </table>
        <div class="wp-btm d-flex"><div>Ocena auditów</div><div class="fw-bold">3,09090909090909</div></div>
      </div>
      <div class="wp-sb wp-sb-track wp-iesb">
        <div class="wp-sbtn"></div>
        <div class="wp-sb-thumb wp-rep"></div>
        <div class="flex-grow-1"></div>
        <div class="wp-sbtn wp-down"></div>
      </div>
    </div>
  </div>
</div>

<script src="https://cdn.jsdelivr.net/npm/bootstrap@5.3.1/dist/js/bootstrap.bundle.min.js"></script>
</body>
</html>
